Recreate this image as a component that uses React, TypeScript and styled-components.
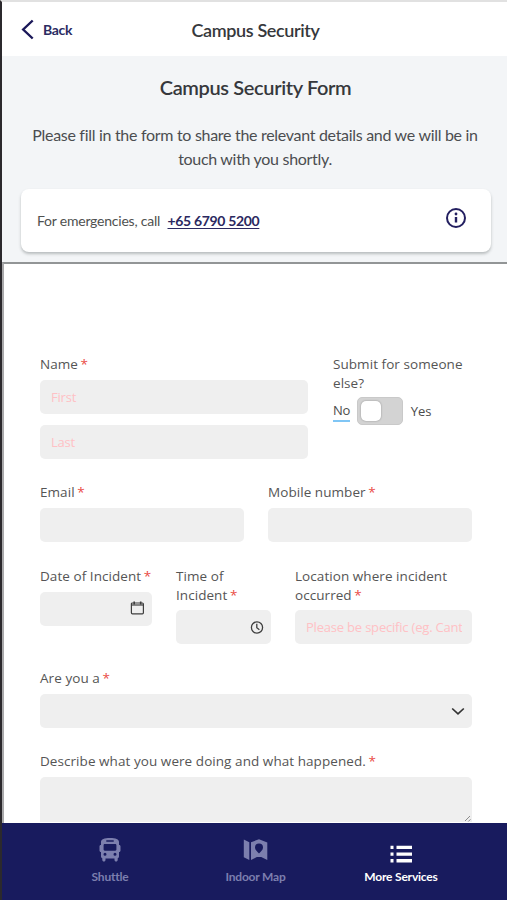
import React from "react";
import styled, { createGlobalStyle } from "styled-components";

const navy = "#181b5e";
const lato = `Lato, "Liberation Sans", sans-serif`;
const openSans = `"Open Sans", "Noto Sans", sans-serif`;

const GlobalStyle = createGlobalStyle`
  * { box-sizing: border-box; }
  body { margin: 0; background: #fff; }
  h1, h2, p { margin: 0; }
`;

const Screen = styled.div`
  display: flex;
  flex-direction: column;
  height: 900px;
  overflow: hidden;
  border-left: 2px solid #2b292d;
  border-top: 2px solid #e1e1e1;
  background: #fff;
  font-family: ${lato};
`;

const Header = styled.header`
  display: grid;
  grid-template-columns: 1fr auto 1fr;
  align-items: center;
  flex: none;
  height: 54px;
  padding: 1px 0 0 19px;
`;

const BackLink = styled.button`
  display: flex;
  align-items: center;
  gap: 9px;
  padding: 0;
  border: 0;
  background: none;
  color: #2b2c62;
  font: 700 14px/20px ${lato};
  letter-spacing: -0.3px;
`;

const ScreenTitle = styled.h1`
  margin-left: -17px;
  color: #36383c;
  font: 600 18px/24px ${lato};
  letter-spacing: -0.37px;
`;

const Intro = styled.section`
  flex: none;
  height: 206px;
  padding: 19px 16px 0 19px;
  background: #f3f5f7;
  text-align: center;
`;

const FormTitle = styled.h2`
  margin: -1px 1px 0 0;
  color: #36383c;
  font: 600 20px/26px ${lato};
  letter-spacing: -0.37px;
`;

const IntroText = styled.p`
  margin: 23px 2px 0 0;
  color: #4b4d50;
  font: 400 16px/24px ${lato};
  letter-spacing: -0.3px;
`;

const EmergencyCard = styled.div`
  display: flex;
  align-items: center;
  justify-content: space-between;
  height: 63px;
  margin-top: 18px;
  padding: 0 24px 5px 16px;
  border-radius: 8px;
  background: #fff;
  box-shadow: 0 2px 3px rgba(50, 60, 60, 0.3);
`;

const EmergencyText = styled.p`
  padding-top: 6px;
  color: #4f5150;
  font: 400 14px/20px ${lato};
  letter-spacing: -0.22px;
`;

const PhoneLink = styled.a`
  margin-left: 4px;
  color: #2b2860;
  font-weight: 700;
  letter-spacing: -0.33px;
  text-decoration: underline;
  text-underline-offset: 2px;
`;

const FormFrame = styled.main`
  flex: none;
  display: flex;
  flex-direction: column;
  height: 561px;
  overflow: hidden;
  padding: 91px 35px 0 36px;
  border-top: 2px solid #929596;
  border-left: 2px solid #a9a9ab;
  font-family: ${openSans};
`;

const Row = styled.div<{ $columns: string; $height: number; $gap?: number }>`
  display: grid;
  flex: none;
  grid-template-columns: ${(p) => p.$columns};
  column-gap: ${(p) => p.$gap ?? 24}px;
  align-items: start;
  height: ${(p) => p.$height}px;
`;

const Field = styled.div`
  min-width: 0;
`;

const Label = styled.label<{ $twoLine?: boolean }>`
  display: block;
  margin-bottom: ${(p) => (p.$twoLine ? 5 : 6)}px;
  color: #555;
  font-size: 13.5px;
  line-height: 19px;
  letter-spacing: 0.06px;
  white-space: nowrap;
`;

const Star = styled.span`
  margin-left: -1px;
  color: #ea4b45;
`;

const Control = styled.div<{ $height?: number; $icon?: boolean }>`
  display: flex;
  align-items: center;
  height: ${(p) => p.$height ?? 34}px;
  padding: 0 ${(p) => (p.$icon ? 7 : 10)}px 0 11px;
  border-radius: 5px;
  background: #efefef;
  color: #3f3f3f;

  & + & {
    margin-top: 11px;
  }
`;

const TextInput = styled.input`
  flex: 1;
  width: 0;
  min-width: 0;
  padding: 0;
  border: 0;
  outline: 0;
  background: none;
  font: 400 13px/18px ${openSans};
  letter-spacing: -0.2px;

  &::placeholder {
    color: #ffc1c5;
    opacity: 1;
  }
`;

const TextArea = styled(Control)`
  align-items: flex-end;
  justify-content: flex-end;
  padding: 0 1px 0 10px;
  border-radius: 5px 5px 0 0;
`;

const ToggleRow = styled.div`
  display: flex;
  align-items: center;
  gap: 7.5px;
  margin-top: -1px;
  color: #4b4b4b;
  font-size: 13px;
  line-height: 19px;
  letter-spacing: -0.1px;
`;

const ActiveOption = styled.span`
  border-bottom: 2px solid #80c6f5;
  letter-spacing: -0.4px;
`;

const Toggle = styled.span`
  display: flex;
  width: 46px;
  height: 28px;
  padding: 3px;
  border: 1px solid #c9c9c9;
  border-radius: 5px;
  background: #d3d3d3;
`;

const Knob = styled.span`
  width: 20px;
  height: 20px;
  border-radius: 5px;
  background: #fff;
  box-shadow: 0 0 2px rgba(0, 0, 0, 0.35);
`;

const BottomNav = styled.nav`
  display: grid;
  flex: 1;
  grid-template-columns: repeat(3, 145.5px);
  justify-content: center;
  padding-left: 2px;
  background: ${navy};
`;

const NavItem = styled.a<{ $active?: boolean }>`
  display: flex;
  flex-direction: column;
  align-items: center;
  padding-top: 13px;
  color: ${(p) => (p.$active ? "#fff" : "#7c7fae")};
  font: 700 12px/18px ${lato};
  letter-spacing: -0.2px;

  svg {
    height: 28px;
    margin-bottom: 4px;
  }
`;

const Required = ({ children, twoLine }: { children: React.ReactNode; twoLine?: boolean }) => (
  <Label $twoLine={twoLine}>
    {children} <Star>*</Star>
  </Label>
);

const BackIcon = () => (
  <svg width="13" height="22" viewBox="0 0 13 22" fill="none" stroke="#1b1859" strokeWidth="2.4">
    <path d="M11.7 1.500 2.200 10.500l9.500 9" />
  </svg>
);

const InfoIcon = () => (
  <svg width="22" height="22" viewBox="0 0 22 22" fill="none" stroke="#231f60">
    <circle cx="11" cy="11" r="9" strokeWidth="2" />
    <path d="M11 10v5.500" strokeWidth="2.4" />
    <circle cx="11" cy="7" r="1.4" fill="#231f60" stroke="none" />
  </svg>
);

const CalendarIcon = () => (
  <svg width="15" height="15" viewBox="0 0 15 15" fill="none" stroke="currentColor">
    <rect x="1.400" y="2" width="12" height="10.800" rx="1" strokeWidth="1.2" />
    <path d="M1.500 4h12" strokeWidth="1.2" />
    <path d="M4.200.4v3M10.700.4v3" strokeWidth="1.6" />
  </svg>
);

const ClockIcon = () => (
  <svg width="14" height="14" viewBox="0 0 14 14" fill="none" stroke="currentColor" strokeWidth="1.3">
    <circle cx="7" cy="7.500" r="5.600" />
    <path d="M6.800 3.700v4l2.600 2" />
  </svg>
);

const ChevronIcon = () => (
  <svg width="14" height="10" viewBox="0 0 14 10" fill="none" stroke="#333" strokeWidth="1.7">
    <path d="m1.200 2.500 5.800 5.400 5.800-5.400" />
  </svg>
);

const ResizeGrip = () => (
  <svg width="7" height="7" viewBox="0 0 7 7" stroke="#8b8b8b" strokeWidth="1">
    <path d="M1 6 6 1M4.300 6.500 6.500 4.300" />
  </svg>
);

const BusIcon = () => (
  <svg width="22" height="28" viewBox="0 0 22 28" fill="currentColor">
    <path
      fillRule="evenodd"
      d="M11 2C5.200 2 2 3.400 2 6v3C.9 9 .5 9.500.5 10.500v4c0 .9.5 1.500 1.500 1.500v4.500c0 .9.500 1.500 1.300 1.700V24c0 .9.700 1.500 1.600 1.500S6.500 24.900 6.500 24v-1.500h9V24c0 .9.700 1.500 1.600 1.500s1.600-.6 1.600-1.500v-1.800c.8-.2 1.300-.8 1.300-1.700V16c1 0 1.500-.6 1.500-1.500v-4c0-1-.4-1.500-1.500-1.500V6c0-2.600-3.200-4-9-4ZM7.300 4.200h7.400v1.500H7.300V4.200ZM5.800 8h10.400c.7 0 1.200.5 1.200 1.200v4.300c0 .7-.5 1.200-1.200 1.200H5.800c-.7 0-1.200-.5-1.200-1.200V9.200c0-.7.5-1.200 1.200-1.200Zm.2 8.800a1.500 1.500 0 1 1 0 3 1.500 1.500 0 0 1 0-3Zm10 0a1.500 1.500 0 1 1 0 3 1.500 1.500 0 0 1 0-3Z"
    />
  </svg>
);

const MapIcon = () => (
  <svg width="25" height="28" viewBox="0 0 25 28" fill="currentColor">
    <path d="M.8 3.500 6.300 6.300V24L.8 21.200Z" />
    <path
      fillRule="evenodd"
      d="M8 6.200 16 3.300l8.300 3.200V24l-6.100-3h-4.300L8 24V6.200Zm8 1.300a4 4 0 0 0-4 4c0 2.400 2 3.900 4 6 2-2.100 4-3.600 4-6a4 4 0 0 0-4-4Z"
    />
  </svg>
);

const ListIcon = () => (
  <svg width="24" height="28" viewBox="0 0 24 28" fill="currentColor">
    <path d="M1.500 9.700h3V13h-3zM7.500 9.700H23V13H7.500zM1.500 16.400h3v3.300h-3zM7.500 16.400H23v3.300H7.500zM1.500 23.100h3v3.300h-3zM7.500 23.100H23v3.300H7.500z" />
  </svg>
);

export default function App() {
  return (
    <>
      <GlobalStyle />
      <Screen>
        <Header>
          <BackLink>
            <BackIcon />
            Back
          </BackLink>
          <ScreenTitle>Campus Security</ScreenTitle>
        </Header>

        <Intro>
          <FormTitle>Campus Security Form</FormTitle>
          <IntroText>
            Please fill in the form to share the relevant details and we will be in
            <br />
            touch with you shortly.
          </IntroText>
          <EmergencyCard>
            <EmergencyText>
              For emergencies, call <PhoneLink>+65 6790 5200</PhoneLink>
            </EmergencyText>
            <InfoIcon />
          </EmergencyCard>
        </Intro>

        <FormFrame>
          <Row $columns="268px 1fr" $gap={25} $height={128.4}>
            <Field>
              <Required>Name</Required>
              <Control>
                <TextInput placeholder="First" />
              </Control>
              <Control>
                <TextInput placeholder="Last" />
              </Control>
            </Field>
            <Field>
              <Label $twoLine>
                Submit for someone
                <br />
                else?
              </Label>
              <ToggleRow>
                <ActiveOption>No</ActiveOption>
                <Toggle>
                  <Knob />
                </Toggle>
                <span>Yes</span>
              </ToggleRow>
            </Field>
          </Row>

          <Row $columns="1fr 1fr" $height={83.6}>
            <Field>
              <Required>Email</Required>
              <Control>
                <TextInput />
              </Control>
            </Field>
            <Field>
              <Required>Mobile number</Required>
              <Control>
                <TextInput />
              </Control>
            </Field>
          </Row>

          <Row $columns="112px 95px 1fr" $height={102}>
            <Field>
              <Required>Date of Incident</Required>
              <Control $icon>
                <TextInput />
                <CalendarIcon />
              </Control>
            </Field>
            <Field>
              <Required twoLine>
                Time of
                <br />
                Incident
              </Required>
              <Control $icon>
                <TextInput />
                <ClockIcon />
              </Control>
            </Field>
            <Field>
              <Required twoLine>
                Location where incident
                <br />
                occurred
              </Required>
              <Control>
                <TextInput placeholder="Please be specific (eg. Canteen 2)" />
              </Control>
            </Field>
          </Row>

          <Row $columns="1fr" $height={83}>
            <Field>
              <Required>Are you a</Required>
              <Control $icon>
                <TextInput />
                <ChevronIcon />
              </Control>
            </Field>
          </Row>

          <Row $columns="1fr" $height={80}>
            <Field>
              <Required>Describe what you were doing and what happened.</Required>
              <TextArea $height={45}>
                <ResizeGrip />
              </TextArea>
            </Field>
          </Row>
        </FormFrame>

        <BottomNav>
          <NavItem>
            <BusIcon />
            Shuttle
          </NavItem>
          <NavItem>
            <MapIcon />
            Indoor Map
          </NavItem>
          <NavItem $active>
            <ListIcon />
            More Services
          </NavItem>
        </BottomNav>
      </Screen>
    </>
  );
}
